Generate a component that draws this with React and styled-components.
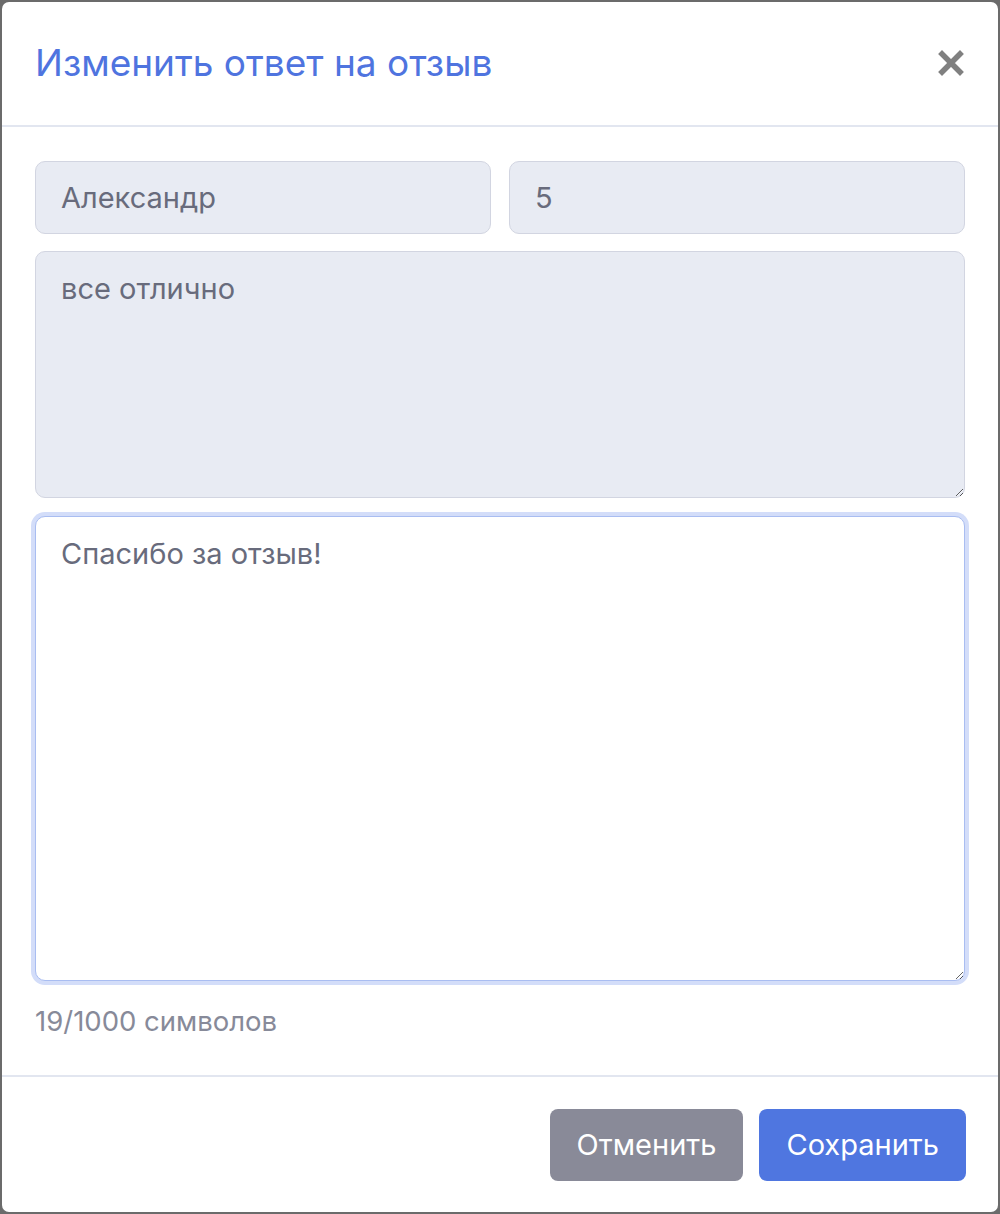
import React, { useState } from "react";
import styled, { createGlobalStyle } from "styled-components";

const GlobalStyle = createGlobalStyle`
  html, body {
    margin: 0;
    padding: 0;
    background: #6b6b6b;
  }
  * {
    box-sizing: border-box;
  }
`;

const App = () => {
  const [reply, setReply] = useState("Спасибо за отзыв!");

  return (
    <>
      <GlobalStyle />
      <Backdrop>
        <Modal>
          <ModalHeader>
            <Title>Изменить ответ на отзыв</Title>
            <CloseButton type="button" aria-label="Закрыть">
              <svg width="26" height="26" viewBox="0 0 26 26">
                <path
                  d="M4 4 L22 22 M22 4 L4 22"
                  stroke="#808080"
                  strokeWidth="5.5"
                  strokeLinecap="square"
                />
              </svg>
            </CloseButton>
          </ModalHeader>

          <ModalBody>
            <FieldRow>
              <Input value="Александр" readOnly />
              <Input value="5" readOnly />
            </FieldRow>
            <TextArea $height={247} value="все отлично" readOnly />
            <TextArea
              $height={465}
              $focused
              value={reply}
              onChange={(e) => setReply(e.target.value)}
            />
            <Counter>19/1000 символов</Counter>
          </ModalBody>

          <ModalFooter>
            <Button $variant="secondary" type="button">Отменить</Button>
            <Button $variant="primary" type="button">Сохранить</Button>
          </ModalFooter>
        </Modal>
      </Backdrop>
    </>
  );
};

const Backdrop = styled.div`
  padding: 2px;
  min-height: 1214px;
`;

const Modal = styled.div`
  width: 996px;
  height: 1210px;
  background: #ffffff;
  border-radius: 7px;
  display: flex;
  flex-direction: column;
  font-family: Inter, "Noto Sans", sans-serif;
`;

const ModalHeader = styled.header`
  height: 125px;
  padding: 0 33px;
  display: flex;
  align-items: center;
  justify-content: space-between;
  border-bottom: 2px solid #e2e6f0;
`;

const Title = styled.h1`
  margin: 0 0 2px 0;
  font-weight: 400;
  font-size: 37px;
  color: #4f74df;
`;

const CloseButton = styled.button`
  border: none;
  background: none;
  padding: 0;
  width: 28px;
  height: 28px;
  display: flex;
  align-items: center;
  justify-content: center;
  cursor: pointer;
  margin-bottom: 2px;
`;

const ModalBody = styled.section`
  flex: 1;
  padding: 34px 33px 0 33px;
  display: flex;
  flex-direction: column;
  gap: 17px;
`;

const FieldRow = styled.div`
  display: grid;
  grid-template-columns: 1fr 1fr;
  gap: 18px;
`;

const Input = styled.input`
  width: 100%;
  min-width: 0;
  height: 73px;
  padding: 0 25px;
  border: 1.5px solid #d2d5e1;
  border-radius: 10px;
  background: #e8ebf3;
  font-family: inherit;
  font-size: 29px;
  color: #686b7c;
  outline: none;
`;

const TextArea = styled.textarea`
  height: ${(p) => p.$height}px;
  padding: 19px 25px;
  border: 1.5px solid ${(p) => (p.$focused ? "#a9bdf1" : "#d2d5e1")};
  border-radius: 10px;
  background: ${(p) => (p.$focused ? "#ffffff" : "#e8ebf3")};
  box-shadow: ${(p) => (p.$focused ? "0 0 0 4px #d3ddf9" : "none")};
  font-family: inherit;
  font-size: 29px;
  line-height: 36px;
  color: #686b7c;
  outline: none;
  resize: vertical;
  margin-top: ${(p) => (p.$focused ? "1px" : "0")};
`;

const Counter = styled.div`
  margin-top: 6px;
  font-size: 27.5px;
  color: #878a99;
`;

const ModalFooter = styled.footer`
  height: 137px;
  padding: 0 32px;
  display: flex;
  align-items: center;
  justify-content: flex-end;
  gap: 16px;
  border-top: 2px solid #e2e6f0;
`;

const Button = styled.button`
  height: 72px;
  padding: 0 27px;
  border: none;
  border-radius: 8px;
  font-family: inherit;
  font-size: 29px;
  color: #ffffff;
  cursor: pointer;
  background: ${(p) => (p.$variant === "primary" ? "#4f76e0" : "#898a98")};
`;

export default App;
